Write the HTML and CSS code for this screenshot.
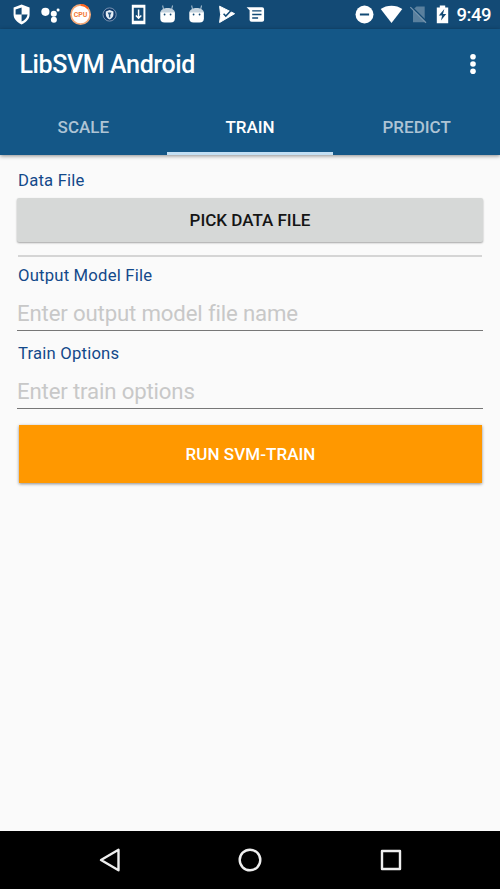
FILE: index.html
```html
<!DOCTYPE html>
<html lang="en">
<head>
<meta charset="utf-8">
<title>LibSVM Android</title>
<link rel="stylesheet" href="styles.css">
</head>
<body>
<div class="status">
  <div class="notifications">
    <svg viewBox="-14.6 -14.5 29.2 29"><path d="M0-10 8-7V0C8 5 4 8 0 10-4 8-8 5-8 0V-7Z" fill="#fff"/><path d="M0-7V0H6C5 4 3 6 0 7V0H-6V-5Z" fill="#134a75"/></svg>
    <svg viewBox="-14.6 -14.5 29.2 29"><g fill="#fff"><circle cx="-5.2" cy="-2.7" r="4.1"/><circle cx="3.2" cy="-.8" r="3"/><circle cx="7.5" cy="-4.6" r="1.5"/><circle cx="3.3" cy="5.2" r="3"/></g></svg>
    <svg viewBox="-14.6 -14.5 29.2 29"><circle r="9.6" fill="#fff" stroke="#f3a878" stroke-width="1.7"/><path d="M0-9.5A9.5 9.5 0 0 1 7.5-6" fill="none" stroke="#ff641e" stroke-width="2.2"/><text x="0" y="2.6" class="cpu">CPU</text></svg>
    <svg viewBox="-14.6 -14.5 29.2 29"><circle r="6.6" fill="#103b6c" stroke="#7893b1" stroke-width="1"/><path d="M0-4.5 3.8-3V0C3.8 2.4 2 4 0 5-2 4-3.8 2.4-3.8 0V-3Z" fill="#e6eef5"/><path d="M-2-2H2L.7.5V3H-.7V.5Z" fill="#245481"/></svg>
    <svg viewBox="-14.6 -14.5 29.2 29"><path fill="#fff" fill-rule="evenodd" d="M-6.8-9.7h13.6v19.4h-13.6zM-4.8-6.7v12.9h9.6V-6.7z"/><path d="M0-5V3M-2.7 1 0 3.7 2.7 1" fill="none" stroke="#fff" stroke-width="1.5"/></svg>
    <svg viewBox="-14.6 -14.5 29.2 29"><use href="#robot"/></svg>
    <svg viewBox="-14.6 -14.5 29.2 29"><g id="robot"><path d="M-5-9-4-5M5-9 4-5" stroke="#9db6c9" stroke-width="1.1"/><path d="M-7.3-1.5C-7.3-8.2 7.3-8.2 7.3-1.5Z" fill="#c4d2dd"/><path d="M-7.3-2H7.3V4Q7.3 8 3 8H-3Q-7.3 8-7.3 4Z" fill="#fff"/><circle cx="-3" cy="0" r=".9" fill="#134a75"/><circle cx="3" cy="0" r=".9" fill="#134a75"/></g></svg>
    <svg viewBox="-14.6 -14.5 29.2 29"><path d="M-7-8.3 8-.8-7 8-6 0Z" fill="#fff" stroke="#fff" stroke-linejoin="round"/><path d="M-3-.8-.8 1.6 4.5-4" stroke="#134a75" stroke-width="1.5" fill="none"/></svg>
    <svg viewBox="-14.6 -14.5 29.2 29"><path d="M-9-7.3H6.5Q8.5-7.3 8.5-5.3V5.5Q8.5 7.3 6.5 7.3H-4Q-6 7.3-6 5.5V-4.2Z" fill="#fff"/><path d="M-3.4-3.6H5.9M-3.4 0H5.9M-3.4 3.5H2.5" stroke="#134a75" stroke-width="1.3"/></svg>
  </div>
  <div class="system">
    <svg width="27" height="29" viewBox="-13.5 -14.5 27 29"><circle r="9" fill="#fff"/><path d="M-4.6 0H4.6" stroke="#134a75" stroke-width="2"/></svg>
    <svg width="27" height="29" viewBox="-13.5 -14.5 27 29"><path d="M0 8.5-10.8-5.4C-5-10 5-10 10.8-5.4Z" fill="#fff"/></svg>
    <svg width="27" height="29" viewBox="-13.5 -14.5 27 29"><path d="M-5.5-5-2-8H6.2V7.8H-5.5Z" fill="#5a809e"/><path d="M-7.3-7.9 8.4 7.7" stroke="#134a75" stroke-width="1.8"/><path d="M-8.2-7.4 7.5 8.2" stroke="#7896af" stroke-width="1.2"/></svg>
    <svg width="21" height="29" viewBox="-10.5 -14.5 21 29"><path d="M-5.7-7H-2.7V-9H2.7V-7H5.7V8.7H-5.7Z" fill="#fff"/><path d="M1.8-5.5-3.7 1H-.4L-1.5 6 3.7-.5H.5Z" fill="#134a75"/></svg>
    <span class="time">9:49</span>
  </div>
</div>
<header class="header">
  <div class="toolbar"><h1>LibSVM Android</h1><svg class="more" width="8" height="22" viewBox="0 0 8 22"><g fill="#fff"><circle cx="4" cy="3.7" r="2.8"/><circle cx="4" cy="11" r="2.8"/><circle cx="4" cy="18.3" r="2.8"/></g></svg></div>
  <nav class="tabs"><div class="tab"><span>SCALE</span></div><div class="tab active"><span>TRAIN</span></div><div class="tab"><span>PREDICT</span></div></nav>
</header>
<main class="content">
  <label class="label">Data File</label>
  <button class="pick">PICK DATA FILE</button>
  <div class="divider"></div>
  <label class="label" for="model">Output Model File</label>
  <input id="model" class="field" placeholder="Enter output model file name">
  <label class="label second" for="options">Train Options</label>
  <input id="options" class="field" placeholder="Enter train options">
  <button class="run">RUN SVM-TRAIN</button>
</main>
<footer class="navbar">
  <svg width="26" height="26" viewBox="-13 -13 26 26"><path d="M8.5-10.2V10.2L-9 0Z"/></svg>
  <svg width="26" height="26" viewBox="-13 -13 26 26"><circle r="10.3"/></svg>
  <svg width="26" height="26" viewBox="-13 -13 26 26"><path d="M-9-9H9V9H-9Z"/></svg>
</footer>
</body>
</html>
```
FILE: styles.css
```css
* { box-sizing: border-box; }
body {
  margin: 0;
  height: 889px;
  display: flex;
  flex-direction: column;
  overflow: hidden;
  background: #fafafa;
  font-family: Roboto, sans-serif;
}
svg { display: block; flex: none; }
.status {
  height: 29px;
  background: #134a75;
  display: flex;
  justify-content: space-between;
  padding: 0 9.4px 0 7.2px;
}
.notifications, .system { display: flex; }
.notifications svg { width: 29.2px; height: 29px; }
.cpu { font: 700 7px Roboto, sans-serif; fill: #f47a36; text-anchor: middle; }
.time {
  margin-left: 4px;
  width: 34px;
  color: #fff;
  font-size: 18.5px;
  font-weight: 500;
  line-height: 31px;
  letter-spacing: -0.5px;
}
.header {
  height: 126px;
  background: #145787;
  box-shadow: 0 1px 4px rgba(0, 0, 0, .45);
}
.toolbar {
  height: 71px;
  padding: 0 23px 0 19.5px;
  display: flex;
  align-items: center;
  justify-content: space-between;
}
h1 {
  margin: 0;
  color: #fff;
  font-size: 25px;
  font-weight: 500;
  line-height: 30px;
  letter-spacing: -0.38px;
}
.more { margin-top: -2px; }
.tabs { height: 55px; display: grid; grid-template-columns: repeat(3, 1fr); }
.tab {
  display: flex;
  align-items: flex-start;
  justify-content: center;
  padding-top: 17px;
  color: #aec4d5;
  font-size: 17px;
  font-weight: 500;
  line-height: 20px;
  border-bottom: 3px solid transparent;
}
.active { color: #fff; border-color: #c3dff3; }
.content {
  flex: 1;
  padding: 15px 17px 0;
  display: flex;
  flex-direction: column;
}
.label {
  height: 22px;
  margin-left: 1px;
  color: #13498a;
  font-size: 16.67px;
  line-height: 22px;
  letter-spacing: 0.2px;
}
.pick, .run { border: 0; padding: 0; font: 500 17px Roboto, sans-serif; }
.pick {
  height: 44px;
  margin-top: 5.5px;
  border-radius: 2px;
  background: #d6d8d7;
  color: #151515;
  box-shadow: 0 1px 2px rgba(0, 0, 0, .35);
}
.divider { height: 2px; margin: 13px 1px 8px; background: #d5d5d5; }
.field {
  width: 100%;
  height: 44px;
  padding: 10px 0 0;
  border: 0;
  border-bottom: 1px solid #777;
  border-radius: 0;
  outline: 0;
  background: transparent;
  font: 22.2px Roboto, sans-serif;
  letter-spacing: -0.15px;
}
.field::placeholder { color: #c8c8c8; opacity: 1; }
.second { margin-top: 12px; }
.run {
  height: 58px;
  margin: 16px 1px 0 2px;
  background: #ff9800;
  color: #fff;
  letter-spacing: 0.05px;
  box-shadow: 0 1px 3px rgba(0, 0, 0, .45);
}
.navbar {
  height: 58px;
  background: #000;
  display: flex;
  justify-content: space-between;
  align-items: center;
  padding: 0 96.5px;
}
.navbar svg { fill: none; stroke: #eee; stroke-width: 2.4; stroke-linejoin: round; }
```
